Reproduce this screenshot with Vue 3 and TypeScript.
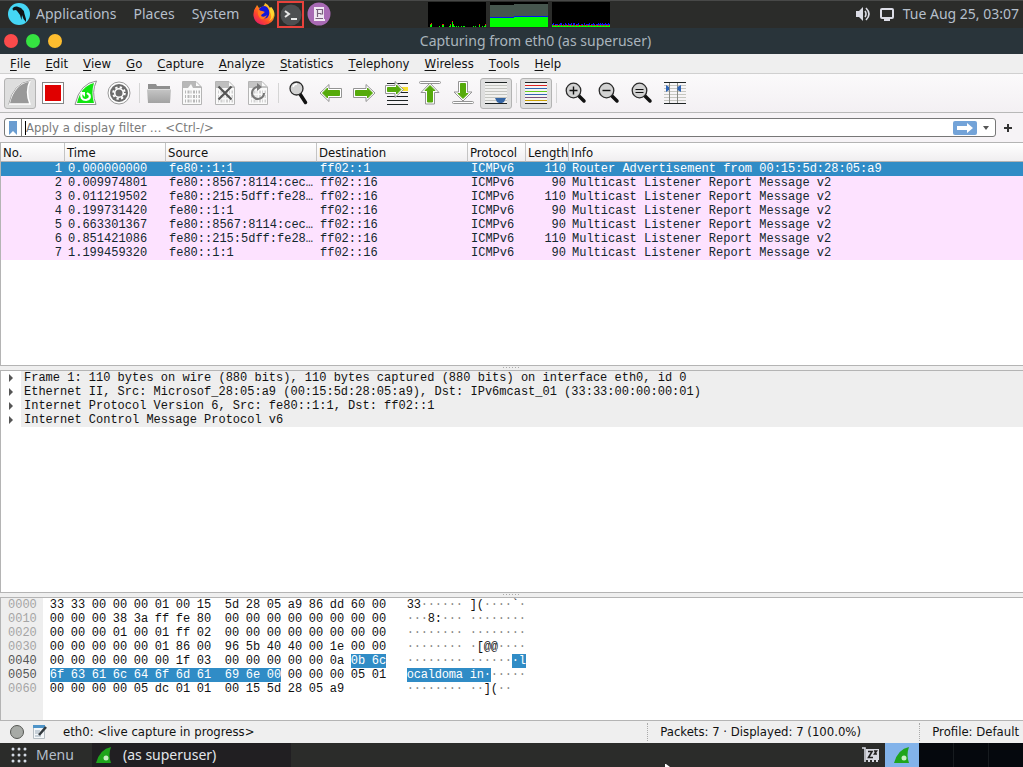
<script setup lang="ts">
import { computed, ref } from 'vue'

interface Packet {
  no: number
  time: string
  source: string
  destination: string
  protocol: string
  length: number
  info: string
}

interface Cell {
  text: string
  selected: boolean
  joined: boolean
  dot: boolean
}

const places = ['Applications', 'Places', 'System']
const menus = ['File', 'Edit', 'View', 'Go', 'Capture', 'Analyze', 'Statistics', 'Telephony', 'Wireless', 'Tools', 'Help']
const columns = ['No.', 'Time', 'Source', 'Destination', 'Protocol', 'Length', 'Info']

const report = 'Multicast Listener Report Message v2'
const packets: Packet[] = [
  { no: 1, time: '0.000000000', source: 'fe80::1:1', destination: 'ff02::1', protocol: 'ICMPv6', length: 110, info: 'Router Advertisement from 00:15:5d:28:05:a9' },
  { no: 2, time: '0.009974801', source: 'fe80::8567:8114:cec…', destination: 'ff02::16', protocol: 'ICMPv6', length: 90, info: report },
  { no: 3, time: '0.011219502', source: 'fe80::215:5dff:fe28…', destination: 'ff02::16', protocol: 'ICMPv6', length: 110, info: report },
  { no: 4, time: '0.199731420', source: 'fe80::1:1', destination: 'ff02::16', protocol: 'ICMPv6', length: 90, info: report },
  { no: 5, time: '0.663301367', source: 'fe80::8567:8114:cec…', destination: 'ff02::16', protocol: 'ICMPv6', length: 90, info: report },
  { no: 6, time: '0.851421086', source: 'fe80::215:5dff:fe28…', destination: 'ff02::16', protocol: 'ICMPv6', length: 110, info: report },
  { no: 7, time: '1.199459320', source: 'fe80::1:1', destination: 'ff02::16', protocol: 'ICMPv6', length: 90, info: report },
]
const selectedPacket = ref(1)
const filter = ref('')

const layers = [
  'Frame 1: 110 bytes on wire (880 bits), 110 bytes captured (880 bits) on interface eth0, id 0',
  'Ethernet II, Src: Microsof_28:05:a9 (00:15:5d:28:05:a9), Dst: IPv6mcast_01 (33:33:00:00:00:01)',
  'Internet Protocol Version 6, Src: fe80::1:1, Dst: ff02::1',
  'Internet Control Message Protocol v6',
]

const dump = [
  '33 33 00 00 00 01 00 15 5d 28 05 a9 86 dd 60 00',
  '00 00 00 38 3a ff fe 80 00 00 00 00 00 00 00 00',
  '00 00 00 01 00 01 ff 02 00 00 00 00 00 00 00 00',
  '00 00 00 00 00 01 86 00 96 5b 40 40 00 1e 00 00',
  '00 00 00 00 00 00 1f 03 00 00 00 00 00 0a 0b 6c',
  '6f 63 61 6c 64 6f 6d 61 69 6e 00 00 00 00 05 01',
  '00 00 00 00 05 dc 01 01 00 15 5d 28 05 a9',
]
const selectionStart = 0x4e
const selectionEnd = 0x5a

const hexRows = computed(() =>
  dump.map((line, row) => {
    const bytes = line.split(' ')
    const hex: Cell[] = []
    const ascii: Cell[] = []
    bytes.forEach((text, column) => {
      const at = row * 16 + column
      const selected = at >= selectionStart && at <= selectionEnd
      const joined = selected && at < selectionEnd && column < bytes.length - 1
      const code = parseInt(text, 16)
      const printable = code > 32 && code < 127
      hex.push({ text, selected, joined, dot: false })
      ascii.push({ text: printable ? String.fromCharCode(code) : '·', selected, joined, dot: !printable })
    })
    return {
      offset: (row * 16).toString(16).padStart(4, '0'),
      active: row === 4 || row === 5,
      hex,
      ascii,
    }
  }),
)

const cpu = [0, 0, 2, 3, 0, 0, 0, 0, 0, 0, 0, 1, 0, 0, 2, 2, 0, 0, 0, 0, 0, 1, 2, 0, 5, 2, 1, 0, 1, 0, 1, 0, 0, 1, 0, 1, 1, 0, 0, 0, 0, 0, 0, 0, 0, 1, 0, 1, 0, 0, 0, 2, 0, 0, 1, 0, 1, 2]
const net = [3, 4, 2, 3, 3, 3, 2, 3, 4, 4, 2, 3, 2, 4, 3, 2, 4, 3, 3, 4, 2, 4, 4, 2, 3, 3, 4, 2, 2, 3, 3, 2, 4, 2, 3, 3, 3, 4, 2, 3, 3, 4, 3, 2, 3, 3, 4, 3, 4, 3, 4, 3, 3, 4, 3, 3, 4, 3]
</script>

<template>
  <div class="desktop">
    <header class="panel">
      <svg class="parrot" width="22" height="22" viewBox="0 0 22 22" aria-hidden="true">
        <circle cx="11" cy="11" r="11" fill="#45d6f5" />
        <path d="M4.500 5.500Q6 3 9 3.500L13 5Q16 7 16.500 11L18 16L18 19L15.500 16L14 12L13.500 17L12 12L9.500 8.500L8 7L5 7.500Z" fill="#101417" />
      </svg>
      <nav class="places">
        <button v-for="place in places" :key="place" type="button">{{ place }}</button>
      </nav>
      <div class="launchers">
        <button type="button" aria-label="Firefox">
          <svg width="24" height="24" viewBox="0 0 24 24">
            <defs>
              <linearGradient id="fox" x1="1" y1="0" x2="0.200" y2="1">
                <stop offset="0" stop-color="#fff04a" />
                <stop offset="0.400" stop-color="#ff9c16" />
                <stop offset="0.700" stop-color="#ff4a28" />
                <stop offset="1" stop-color="#e5186a" />
              </linearGradient>
            </defs>
            <path d="M13 1Q17 3 18 6L19 5Q23 9 22.500 14Q21 22 12.500 23Q3 23 1.500 14Q1 8 4 5L5 3L7 6L9 5Q12 5 13 1Z" fill="url(#fox)" />
            <path d="M7 7Q11 2 15 5Q18 8 17 13Q15 18 10 16Q6 15 8 12L11 12L12 10L8 9Z" fill="#1418d8" />
            <path d="M6 8L10 9L13 10L10 12L9 14Q12 16 15 13Q13 18 9 17Q5 14 6 8Z" fill="#ff7a1d" />
            <path d="M13 1Q18 4 18 10Q21 15 17 19Q22 16 22 11Q21 7 19 5L18 7Q16 3 13 1Z" fill="#ffd633" />
          </svg>
        </button>
        <button type="button" class="terminal" aria-label="Terminal">
          <svg width="22" height="22" viewBox="0 0 22 22">
            <circle cx="11" cy="11" r="10.500" fill="#4d4f51" />
            <path d="M5 7L9 10L5 13M11 15H17" fill="none" stroke="#e8e8e8" stroke-width="2" />
          </svg>
        </button>
        <button type="button" aria-label="Text editor">
          <svg width="24" height="24" viewBox="0 0 24 24">
            <circle cx="12" cy="12" r="11.500" fill="#a86ab4" />
            <path d="M8 5H17V17H18V19H7V5Z" fill="#f1e8f3" />
            <path d="M9 7.500H15.500V12H13M10.500 8V15M11 11.500H14M8.500 16.500H16" fill="none" stroke="#77607b" stroke-width="1.200" />
          </svg>
        </button>
      </div>
      <div class="monitors">
        <svg width="58" height="25" viewBox="0 0 58 25" shape-rendering="crispEdges" aria-hidden="true">
          <rect width="58" height="25" fill="#000" />
          <g v-for="(v, i) in cpu" :key="i">
            <rect v-if="v > 1" :x="i" :y="24 - v" width="1" height="1" fill="#f21a10" />
            <rect v-if="v" :x="i" :y="25 - v" width="1" :height="v" fill="#0f0" />
          </g>
        </svg>
        <svg width="58" height="25" viewBox="0 0 58 25" shape-rendering="crispEdges" aria-hidden="true">
          <rect width="58" height="25" fill="#000" />
          <path d="M0 3H24V2H58V25H0Z" fill="#46564e" />
          <path d="M0 15H24V14H58V25H0Z" fill="#0018f0" />
          <path d="M0 16H24V15H58V25H0Z" fill="#0f0" />
        </svg>
        <svg width="58" height="25" viewBox="0 0 58 25" shape-rendering="crispEdges" aria-hidden="true">
          <rect width="58" height="25" fill="#000" />
          <g v-for="(v, i) in net" :key="i">
            <rect :x="i" :y="25 - v" width="1" :height="v" fill="#1212f0" />
            <rect :x="i" y="23" width="1" height="1" :fill="i % 3 ? '#e01818' : '#0f0'" />
            <rect :x="i" y="24" width="1" height="1" fill="#0f0" />
          </g>
        </svg>
      </div>
      <div class="clock">
        <svg width="16" height="16" viewBox="0 0 16 16" aria-hidden="true">
          <path d="M1 5H4L8 1V15L4 11H1Z" fill="#dcdde6" />
          <path d="M10 5Q12 8 10 11M11 2Q17 8 11 14" fill="none" stroke="#dcdde6" stroke-width="1.600" />
        </svg>
        <svg width="16" height="14" viewBox="0 0 16 14" aria-hidden="true">
          <rect x="2" y="2" width="12" height="9" rx="1" fill="none" stroke="#dcdde6" stroke-width="2" />
          <path d="M5 13H11" stroke="#dcdde6" stroke-width="2" />
        </svg>
        <time>Tue Aug 25, 03:07</time>
      </div>
    </header>

    <div class="titlebar">
      <div class="lights">
        <button type="button" class="close" aria-label="Close"></button>
        <button type="button" class="minimize" aria-label="Minimize"></button>
        <button type="button" class="maximize" aria-label="Maximize"></button>
      </div>
      <h1>Capturing from eth0 (as superuser)</h1>
    </div>

    <nav class="menubar">
      <button v-for="menu in menus" :key="menu" type="button"><u>{{ menu[0] }}</u>{{ menu.slice(1) }}</button>
    </nav>

    <div class="toolbar">
      <button type="button" class="pressed" aria-label="Start capture">
        <svg viewBox="1 1 30 29"><path d="M5 26Q10 5 26 3Q21 14 26 26Z" fill="#999" stroke="#fff" stroke-width="1.500" /><path d="M4.500 26.500Q9 5 26.500 2.500" fill="none" stroke="#aaa" /></svg>
      </button>
      <button type="button" aria-label="Stop capture">
        <svg viewBox="1 1 30 29"><rect x="5.500" y="4.500" width="21" height="21" fill="#fff" stroke="#858585" /><rect x="8" y="7" width="16" height="16" fill="#e00000" /></svg>
      </button>
      <button type="button" aria-label="Restart capture">
        <svg viewBox="1 1 30 29"><path d="M5 26.500Q10 5 26.500 3Q21 14 26 26.500Z" fill="#fff" stroke="#929292" /><path d="M7 25Q11 8 24 5Q21 14 24 25Z" fill="#10e510" /><path d="M11.500 15Q10 22 16 22Q21 21 19.500 17L17 15" fill="none" stroke="#fff" stroke-width="2.200" /><path d="M10 14H15V19Z" fill="#fff" /></svg>
      </button>
      <button type="button" aria-label="Capture options">
        <svg viewBox="1 1 30 29">
          <circle cx="16" cy="15" r="11" fill="#fff" stroke="#999" />
          <circle cx="16" cy="15" r="9" fill="#6c6c6c" />
          <circle cx="16" cy="15" r="5.800" fill="none" stroke="#fff" stroke-width="2" stroke-dasharray="2.300 2.255" />
          <circle cx="16" cy="15" r="4.300" fill="#6c6c6c" stroke="#fff" stroke-width="1.600" />
        </svg>
      </button>
      <i class="rule"></i>
      <button type="button" aria-label="Open file">
        <svg viewBox="1 1 30 29">
          <defs>
            <linearGradient id="folder" x1="0" y1="0" x2="0" y2="1">
              <stop offset="0" stop-color="#c6c6c6" />
              <stop offset="1" stop-color="#a2a2a2" />
            </linearGradient>
          </defs>
          <path d="M5 6H13L14 8H27V12H5Z" fill="#8f8f8f" /><path d="M4 11H28L27 25H5Z" fill="url(#folder)" /><path d="M4 11.500H28" stroke="#dcdcdc" />
        </svg>
      </button>
      <button type="button" aria-label="Save file">
        <svg viewBox="1 1 30 29">
          <path d="M6.500 3.500H20L25.500 9V26.500H6.500Z" fill="#fafafa" stroke="#b5b5b5" /><path d="M7 4H20V8H25V10H17L15 6L12 10H7Z" fill="#b8b8b8" />
          <path d="M9 14H24M9 18.500H24M9 23H24" stroke="#b8b8b8" stroke-width="3" stroke-dasharray="1 1.500 2 1" />
        </svg>
      </button>
      <button type="button" aria-label="Close file">
        <svg viewBox="1 1 30 29">
          <path d="M6.500 3.500H20L25.500 9V26.500H6.500Z" fill="#fafafa" stroke="#b5b5b5" /><path d="M7 4H20V8H25V10H7Z" fill="#bfbfbf" />
          <path d="M9 14H24M9 18.500H24M9 23H24" stroke="#d0d0d0" stroke-width="3" stroke-dasharray="1 1.500 2 1" />
          <path d="M9.500 8.500L22.500 21.500M22.500 8.500L9.500 21.500" stroke="#555" stroke-width="2.200" />
        </svg>
      </button>
      <button type="button" aria-label="Reload file">
        <svg viewBox="1 1 30 29">
          <path d="M6.500 3.500H20L25.500 9V26.500H6.500Z" fill="#fafafa" stroke="#b5b5b5" /><path d="M7 4H20V8H25V10H7Z" fill="#c4c4c4" />
          <path d="M9 14H24M9 18.500H24M9 23H24" stroke="#d4d4d4" stroke-width="3" stroke-dasharray="1 1.500 2 1" />
          <path d="M16 9A6 6 0 1 0 22 15" fill="none" stroke="#777" stroke-width="2.200" /><path d="M15 5L20 9L15 13Z" fill="#777" />
        </svg>
      </button>
      <i class="rule"></i>
      <button type="button" aria-label="Find packet">
        <svg viewBox="1 1 30 29"><path d="M18 16L23.500 24.500" stroke="#111" stroke-width="3.500" stroke-linecap="round" /><circle cx="14.500" cy="10.500" r="6.500" fill="#d2d2d2" stroke="#2b2b2b" stroke-width="1.300" /><path d="M11 9Q12 6 15 6" fill="none" stroke="#fff" stroke-width="1.500" /></svg>
      </button>
      <button type="button" aria-label="Previous packet">
        <svg viewBox="1 1 30 29"><path d="M5 15L14 6.500V10.500H26.500V19.500H14V23.500Z" fill="#fff" stroke="#949494" stroke-linejoin="round" /><path d="M7.500 15L12.500 10V12.500H24.500V17.500H12.500V20Z" fill="#55aa0a" stroke="#55aa0a" /></svg>
      </button>
      <button type="button" aria-label="Next packet">
        <svg viewBox="1 1 30 29"><path d="M27 15L18 6.500V10.500H5.500V19.500H18V23.500Z" fill="#fff" stroke="#949494" stroke-linejoin="round" /><path d="M24.500 15L19.500 10V12.500H7.500V17.500H19.500V20Z" fill="#55aa0a" stroke="#55aa0a" /></svg>
      </button>
      <button type="button" aria-label="Go to packet">
        <svg viewBox="1 1 30 29"><path d="M6 5.500H27M6 18.500H27M6 22.500H27M6 26.500H27M16 14.500H27" stroke="#1e2424" /><rect x="20" y="9" width="7" height="4" fill="#f6e02f" /><path d="M22.500 11.500L14 3.500V7.500H4.500V15.500H14V19.500Z" fill="#fff" stroke="#949494" stroke-linejoin="round" /><path d="M20 11.500L15.500 7V9.500H6.500V13.500H15.500V16Z" fill="#55aa0a" stroke="#55aa0a" /></svg>
      </button>
      <button type="button" aria-label="First packet">
        <svg viewBox="1 1 30 29"><rect x="5.500" y="3.500" width="21" height="2" rx="1" fill="#fff" stroke="#949494" /><path d="M16 5L25 14.500H20.500V26H11.500V14.500H7Z" fill="#fff" stroke="#949494" stroke-linejoin="round" /><path d="M16 7.500L21 12.500H18.500V24H13.500V12.500H11Z" fill="#55aa0a" stroke="#55aa0a" /></svg>
      </button>
      <button type="button" aria-label="Last packet">
        <svg viewBox="1 1 30 29"><rect x="5.500" y="23.500" width="21" height="2" rx="1" fill="#fff" stroke="#949494" /><path d="M16 23L25 14H20.500V3.500H11.500V14H7Z" fill="#fff" stroke="#949494" stroke-linejoin="round" /><path d="M16 20.500L21 15.500H18.500V5.500H13.500V15.500H11Z" fill="#55aa0a" stroke="#55aa0a" /></svg>
      </button>
      <button type="button" class="pressed" aria-label="Auto scroll">
        <svg viewBox="1 1 30 29"><rect x="5" y="4" width="22" height="22" fill="#f0f0ee" /><path d="M5 7.500H27M5 10.500H27M5 13.500H27M5 16.500H27M5 19.500H27M5 22.500H27" stroke="#c3c4bf" /><path d="M5 4.500H27M5 25.500H27" stroke="#1e2424" /><path d="M15 20H26L24 24L22 25H19L17 24Z" fill="#3465a4" /></svg>
      </button>
      <i class="rule"></i>
      <button type="button" class="pressed" aria-label="Colorize packets">
        <svg viewBox="1 1 30 29"><rect x="5" y="4" width="22" height="22" fill="#f4f4f4" /><path d="M5 4.500H27M5 25.500H27" stroke="#1e2424" /><path d="M5 7.500H27" stroke="#dd2222" /><path d="M5 10.500H27M5 16.500H27" stroke="#3267b0" /><path d="M5 13.500H27" stroke="#67cc1c" /><path d="M5 19.500H27" stroke="#75507b" /><path d="M5 22.500H27" stroke="#c9a000" /></svg>
      </button>
      <i class="rule"></i>
      <button v-for="zoom in ['in', 'out', 'reset']" :key="zoom" type="button" :aria-label="`Zoom ${zoom}`">
        <svg viewBox="1 1 30 29">
          <path d="M18.500 17.500L24 23" stroke="#111" stroke-width="3.500" stroke-linecap="round" /><circle cx="13.500" cy="12.500" r="7.300" fill="#d2d2d2" stroke="#2b2b2b" stroke-width="1.300" />
          <path v-if="zoom === 'in'" d="M9.500 12.500H17.500M13.500 8.500V16.500" stroke="#111" stroke-width="1.400" />
          <path v-else-if="zoom === 'out'" d="M9.500 12.500H17.500" stroke="#111" stroke-width="1.400" />
          <path v-else d="M9.500 11.500H17.500M9.500 14.500H17.500" stroke="#111" stroke-width="1.200" />
        </svg>
      </button>
      <button type="button" aria-label="Resize columns">
        <svg viewBox="1 1 30 29"><path d="M5 7.500H27M5 10.500H27M5 13.500H27M5 16.500H27M5 19.500H27M5 22.500H27" stroke="#c5c6c0" /><path d="M5 4.500H27M5 25.500H27" stroke="#1e2424" /><path d="M10.500 5V25M18.500 5V25" stroke="#888a85" /><path d="M7 7L10 9V12L7 14ZM22 7L18.500 9V12L22 14Z" fill="#2f65b5" /></svg>
      </button>
    </div>

    <form class="filterbar" @submit.prevent>
      <div class="filter">
        <button type="button" class="bookmark" aria-label="Filter bookmarks">
          <svg width="8" height="14" viewBox="0 0 8 14"><path d="M0 0H8V14L4 10L0 14Z" fill="#6a9cd0" /></svg>
        </button>
        <i class="caret"></i>
        <input v-model="filter" type="text" aria-label="Display filter" placeholder="Apply a display filter … &lt;Ctrl-/&gt;" />
        <button type="submit" class="apply" aria-label="Apply filter">
          <svg width="24" height="14" viewBox="0 0 24 14"><path d="M4 5H14V2L20 7L14 12V9H4Z" fill="#fff" /></svg>
        </button>
        <button type="button" class="recent" aria-label="Recent filters">
          <svg width="6" height="4" viewBox="0 0 6 4"><path d="M0 0H6L3 4Z" fill="#555" /></svg>
        </button>
      </div>
      <button type="button" class="add" aria-label="Add filter button">
        <svg width="8" height="8" viewBox="0 0 8 8"><path d="M4 0V8M0 4H8" stroke="#333" stroke-width="2" /></svg>
      </button>
    </form>

    <section class="pane packets">
      <table>
        <colgroup>
          <col class="c-no" /><col class="c-time" /><col class="c-address" /><col class="c-address" /><col class="c-protocol" /><col class="c-length" /><col />
        </colgroup>
        <thead>
          <tr><th v-for="column in columns" :key="column" scope="col">{{ column }}</th></tr>
        </thead>
        <tbody>
          <tr v-for="p in packets" :key="p.no" :class="{ selected: p.no === selectedPacket }" @click="selectedPacket = p.no">
            <td class="number">{{ p.no }}</td>
            <td>{{ p.time }}</td>
            <td>{{ p.source }}</td>
            <td>{{ p.destination }}</td>
            <td>{{ p.protocol }}</td>
            <td class="number">{{ p.length }}</td>
            <td>{{ p.info }}</td>
          </tr>
        </tbody>
      </table>
    </section>
    <div class="splitter"></div>

    <section class="pane details">
      <ul>
        <li v-for="layer in layers" :key="layer">
          <button type="button" aria-label="Expand">
            <svg width="4" height="8" viewBox="0 0 4 8"><path d="M0 0L4 4L0 8Z" fill="#555" /></svg>
          </button>
          <span>{{ layer }}</span>
        </li>
      </ul>
    </section>
    <div class="splitter"></div>

    <section class="pane bytes">
      <div class="offsets">
        <span v-for="row in hexRows" :key="row.offset" :class="{ active: row.active }">{{ row.offset }}</span>
      </div>
      <div class="dump">
        <div v-for="row in hexRows" :key="row.offset" class="line">
          <div class="hex">
            <span v-for="(cell, i) in row.hex" :key="i" :class="{ selected: cell.selected, joined: cell.joined }">{{ cell.text }}</span>
          </div>
          <div class="ascii">
            <span v-for="(cell, i) in row.ascii" :key="i" :class="{ selected: cell.selected, joined: cell.joined, dot: cell.dot }">{{ cell.text }}</span>
          </div>
        </div>
      </div>
    </section>

    <footer class="status">
      <button type="button" aria-label="Expert information">
        <svg width="16" height="16" viewBox="0 0 16 16"><circle cx="8" cy="8" r="6.500" fill="#a7aaa6" stroke="#555753" /></svg>
      </button>
      <button type="button" aria-label="Capture comment">
        <svg width="16" height="16" viewBox="0 0 16 16"><path d="M1.500 2.500H12.500V14.500H1.500Z" fill="#f4f7f9" stroke="#b5bdc2" /><rect x="1" y="1" width="12" height="3" fill="#4e94c8" /><path d="M3 7H8M3 9H7M3 12H9" stroke="#9aabb8" /><path d="M7 11L14 3" stroke="#333a3e" stroke-width="2.500" /></svg>
      </button>
      <span class="source">eth0: &lt;live capture in progress&gt;</span>
      <span class="count">Packets: 7 · Displayed: 7 (100.0%)</span>
      <span class="profile">Profile: Default</span>
    </footer>

    <div class="taskbar">
      <button type="button" class="start">
        <svg width="16" height="16" viewBox="0 0 16 16" aria-hidden="true">
          <g fill="#d3dae3"><template v-for="y in 3" :key="y"><circle v-for="x in 3" :key="x" :cx="x * 6 - 4" :cy="y * 6 - 4" r="1.500" /></template></g>
        </svg>
        Menu
      </button>
      <button type="button" class="task">
        <svg width="16" height="16" viewBox="0 0 16 16" aria-hidden="true"><path d="M0 16Q4 2 15 0Q12 8 15 16Z" fill="#1fa51c" /><circle cx="10" cy="11" r="2.500" fill="#c8efc5" /></svg>
        (as superuser)
      </button>
      <div class="tray">
        <svg width="18" height="16" viewBox="0 0 18 16" aria-hidden="true"><path d="M0 1H3V15" fill="none" stroke="#d8dae2" stroke-width="1.600" /><path d="M4 2H17V13H16V15H14V13H12V15H10V13H8V15H6V13H4Z" fill="#d8dae2" /><path d="M6 4.500H10L6.500 10.500H11M12 4H14.500L12.500 7H15" fill="none" stroke="#222" stroke-width="1.600" /></svg>
        <button type="button" class="active" aria-label="Wireshark">
          <svg width="16" height="16" viewBox="0 0 16 16"><path d="M0 16Q4 2 15 0Q12 8 15 16Z" fill="#1fa51c" /><circle cx="10" cy="11" r="2.500" fill="#c8efc5" /></svg>
        </button>
        <div class="workspaces"><i></i><i></i><i></i></div>
      </div>
      <svg class="pointer" width="5" height="3" viewBox="0 0 5 3" aria-hidden="true"><path d="M0 3V0H1L5 3Z" fill="#fff" /></svg>
    </div>
  </div>
</template>

<style>
body {
  margin: 0;
}
</style>

<style scoped>
.desktop {
  display: flex;
  flex-direction: column;
  height: 100vh;
  overflow: hidden;
  background: #efefef;
  color: #111;
  font: 13px/18px "DejaVu Sans Condensed", "DejaVu Sans", sans-serif;
}
button {
  display: flex;
  align-items: center;
  justify-content: center;
  margin: 0;
  padding: 0;
  border: 0;
  background: none;
  color: inherit;
  font: inherit;
  white-space: nowrap;
}
svg {
  display: block;
  flex: none;
}
.panel {
  display: flex;
  align-items: center;
  box-sizing: border-box;
  height: 28px;
  flex: none;
  padding: 0 4px 0 8px;
  border-top: 1px solid #484948;
  background: #2b2c2a;
  color: #b5bfcb;
  font: 14px/20px "Noto Sans", sans-serif;
}
.parrot,
.places,
.clock {
  margin-bottom: 2px;
}
.places {
  display: flex;
  gap: 17px;
  margin-left: 6px;
}
.launchers {
  display: flex;
  align-items: center;
  gap: 1px;
  margin-left: 13px;
}
.launchers button:first-child,
.launchers button:last-child {
  padding-bottom: 2px;
}
.terminal {
  width: 27px;
  height: 27px;
  border: 2px solid #e8423b;
  box-sizing: border-box;
}
.launchers button:last-child {
  margin-left: 2px;
}
.monitors {
  display: flex;
  gap: 4px;
  margin-left: 97px;
}
.clock {
  display: flex;
  align-items: center;
  gap: 8px;
  margin-left: auto;
  white-space: nowrap;
}
.titlebar {
  display: grid;
  grid-template-columns: 1fr auto 1fr;
  align-items: center;
  flex: none;
  height: 26px;
  padding: 0 4px;
  background: #29343a;
  color: #a9b4bd;
}
.titlebar h1 {
  grid-column: 2;
  margin: 0 0 0 48px;
  font: 14px/20px "Noto Sans", sans-serif;
}
.lights {
  display: flex;
  gap: 8px;
}
.lights button {
  width: 14px;
  height: 14px;
  border-radius: 50%;
}
.close {
  background: #fb4b4b;
}
.minimize {
  background: #35e341;
}
.maximize {
  background: #fdbd2f;
}
.menubar {
  display: flex;
  flex: none;
  gap: 15px;
  height: 19px;
  padding: 0 10px;
  border-bottom: 1px solid #d0d0d0;
}
.menubar u {
  text-underline-offset: 2px;
}
.toolbar {
  display: flex;
  align-items: center;
  flex: none;
  gap: 1px;
  height: 38px;
  padding: 0 4px;
  border-bottom: 1px solid #b8b8b8;
  background: linear-gradient(#fbfafb, #f3f0f3);
}
.toolbar button {
  box-sizing: border-box;
  width: 32px;
  height: 31px;
  border: 1px solid transparent;
  border-radius: 3px;
}
.toolbar .pressed {
  border-color: #b3b3b3;
  background: #dedede;
}
.toolbar svg {
  width: 30px;
  height: 29px;
}
.rule {
  width: 6px;
  height: 20px;
  background: linear-gradient(#d5d5d5, #d5d5d5) center / 1px 100% no-repeat;
}
.filterbar {
  display: flex;
  align-items: center;
  flex: none;
  height: 29px;
  padding: 0 4px;
  background: #f6f3f6;
}
.filter {
  display: flex;
  align-items: center;
  flex: 1;
  box-sizing: border-box;
  height: 19px;
  border: 1px solid #777;
  border-radius: 3px;
  background: #fff;
}
.bookmark {
  width: 17px;
  height: 17px;
  border-right: 1px solid #777;
}
.caret {
  width: 1px;
  height: 14px;
  margin-left: 3px;
  background: #000;
}
.filter input {
  flex: 1;
  min-width: 0;
  height: 17px;
  padding: 0;
  border: 0;
  outline: 0;
  background: none;
  color: inherit;
  font: inherit;
}
.filter input::placeholder {
  color: #7a7a7a;
  opacity: 1;
}
.apply {
  width: 24px;
  border-radius: 2px;
  background: #73a3d8;
}
.recent {
  width: 18px;
  height: 17px;
}
.add {
  width: 23px;
  height: 20px;
}
.pane {
  box-sizing: border-box;
  min-height: 0;
  overflow: hidden;
  border: 1px solid #b4b4b4;
  border-right: 0;
  background: #fff;
  font: 12px/14px "Liberation Mono", monospace;
}
.packets {
  flex: 224 1 0;
}
.details {
  flex: 224 1 0;
}
.bytes {
  display: flex;
  flex: 123 1 0;
}
.splitter {
  flex: none;
  height: 4px;
}
.splitter::after {
  content: "";
  display: block;
  width: 17px;
  height: 1px;
  margin: 1px auto;
  background: repeating-linear-gradient(90deg, #aaa 0 1px, transparent 1px 3px);
}
table {
  width: 100%;
  border-collapse: separate;
  border-spacing: 0;
  table-layout: fixed;
}
.c-no {
  width: 64px;
}
.c-time {
  width: 101px;
}
.c-address {
  width: 151px;
}
.c-protocol {
  width: 58px;
}
.c-length {
  width: 43px;
}
th {
  overflow: hidden;
  height: 17px;
  padding: 1px 0 0 2px;
  border-right: 1px solid #c4c4c4;
  border-bottom: 1px solid #b4b4b4;
  background: linear-gradient(#fff, #f0eef0);
  font: 13px/17px "DejaVu Sans Condensed", "DejaVu Sans", sans-serif;
  text-align: left;
  white-space: nowrap;
}
th:last-child {
  border-right: 0;
}
td {
  height: 14px;
  padding: 0 0 0 3px;
  overflow: hidden;
  background: #fde2ff;
  color: #12272e;
  white-space: nowrap;
}
.number {
  padding-right: 3px;
  text-align: right;
}
tr.selected td {
  background: #308cc6;
  color: #fff;
}
ul {
  margin: 0;
  padding: 0;
  list-style: none;
}
li {
  display: flex;
  height: 14px;
}
li button {
  width: 20px;
}
li span {
  flex: 1;
  padding-left: 3px;
  background: #eee;
  white-space: nowrap;
}
.offsets {
  display: flex;
  flex-direction: column;
  padding: 0 6px 0 7px;
  background: #eee;
  color: #a5a5a5;
}
.offsets .active {
  color: #555;
}
.dump {
  padding-left: 7px;
}
.line {
  display: flex;
}
.hex {
  display: flex;
  width: 357px;
}
.hex span {
  width: 14px;
  margin-right: 7px;
}
.hex span:nth-child(8) {
  margin-right: 14px;
}
.hex .joined {
  margin-right: 0;
  padding-right: 7px;
}
.hex .joined:nth-child(8) {
  margin-right: 0;
  padding-right: 14px;
}
.hex .selected:last-child {
  margin-right: 0;
}
.ascii {
  display: flex;
}
.ascii span {
  width: 7px;
}
.ascii span:nth-child(8) {
  margin-right: 7px;
}
.ascii .joined:nth-child(8) {
  margin-right: 0;
  padding-right: 7px;
}
.dot {
  color: #888;
}
.line .selected {
  background: #308cc6;
  color: #fff;
}
.status {
  display: flex;
  align-items: center;
  flex: none;
  gap: 7px;
  height: 22px;
  padding: 0 4px 0 9px;
  white-space: nowrap;
}
.source {
  flex: 1;
  margin-left: 8px;
}
.count,
.profile {
  box-sizing: border-box;
  border-left: 1px dotted #aaa;
}
.count {
  width: 265px;
  padding-left: 12px;
}
.profile {
  padding-left: 12px;
}
.taskbar {
  position: relative;
  display: flex;
  align-items: center;
  flex: none;
  height: 24px;
  background: #2b2c2a;
  color: #b5bfcb;
  font: 14px/20px "Noto Sans", sans-serif;
}
.start {
  width: 92px;
  height: 24px;
  justify-content: flex-start;
  gap: 9px;
  padding-left: 11px;
  box-sizing: border-box;
}
.task {
  width: 199px;
  height: 24px;
  justify-content: flex-start;
  gap: 11px;
  padding-left: 4px;
  box-sizing: border-box;
  background: #211f22;
  color: #e3e6ea;
}
.tray {
  display: flex;
  align-items: center;
  margin-left: auto;
}
.tray .active {
  width: 34px;
  height: 24px;
  margin-left: 5px;
  background: #82b3ea;
}
.workspaces {
  display: flex;
  gap: 1px;
  background: #171b1f;
}
.workspaces i {
  width: 34px;
  height: 24px;
  background: #05080d;
}
.pointer {
  position: absolute;
  bottom: 0;
  left: 65%;
}
</style>
